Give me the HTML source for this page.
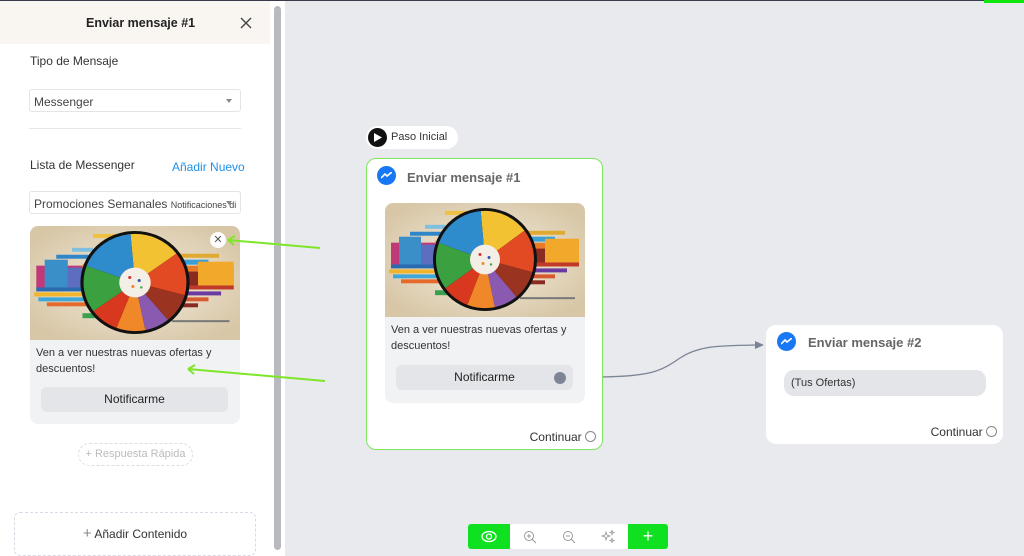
<!DOCTYPE html>
<html><head><meta charset="utf-8">
<style>
*{box-sizing:border-box;margin:0;padding:0}
body{width:1024px;height:556px;overflow:hidden;background:#e9eaee;font-family:"Liberation Sans",Arial,sans-serif;position:relative;color:#333}
.abs{position:absolute}
.topline{left:0;top:0;width:1024px;height:1px;background:#3a3b4a;z-index:5}
.panel{left:0;top:0;width:285px;height:556px;background:#fff}
.hdr{left:0;top:0;width:270px;height:44px;background:#f9f5f0;font-weight:bold;font-size:12.5px;color:#222}
.sel{border:1px solid #e3e4e8;border-radius:3px;background:#fff;font-size:12px;color:#444}
.caret{position:absolute;right:8px;top:50%;margin-top:-2px;border-left:3.5px solid transparent;border-right:3.5px solid transparent;border-top:4px solid #888}
.node{background:#fff;border-radius:10px}
.ttl{font-weight:bold;font-size:13px;color:#666}
.msg{display:inline-block;width:19px;height:19px;border-radius:50%;background:#1877f2}
.img{display:block}
.btn{background:#e4e5e8;border-radius:6px;font-size:12px;color:#222;text-align:center}
.circ{width:11px;height:11px;border:1px solid #888;border-radius:50%;display:inline-block}
</style></head><body>
<svg width="0" height="0" style="position:absolute">
<defs>
<symbol id="pic" viewBox="0 0 200 115" preserveAspectRatio="none">
<radialGradient id="bg" cx="50%" cy="50%" r="60%"><stop offset="0" stop-color="#f4ede0"/><stop offset="1" stop-color="#d8c7a7"/></radialGradient>
<rect width="200" height="115" fill="url(#bg)"/>
<g>
<rect x="6" y="40" width="64" height="25" fill="#c03a7a"/>
<rect x="14" y="34" width="22" height="31" fill="#3a8fc8"/>
<rect x="36" y="42" width="34" height="23" fill="#5d6ec0"/>
<rect x="50" y="38" width="20" height="27" fill="#e8a830"/>
<rect x="6" y="62" width="64" height="4" fill="#2a6ab0"/>
<rect x="4" y="67" width="66" height="4" fill="#f1b52b"/>
<rect x="8" y="72" width="62" height="4" fill="#3ea6d8"/>
<rect x="16" y="77" width="54" height="4" fill="#e56a2c"/>
<rect x="25" y="29" width="45" height="4" fill="#2f86c8"/>
<rect x="40" y="22" width="20" height="4" fill="#7fbfe0"/>
<rect x="60" y="8" width="28" height="4" fill="#f0c040"/>
<rect x="130" y="28" width="50" height="4" fill="#e0aa30"/>
<rect x="130" y="34" width="40" height="5" fill="#3aa0d8"/>
<rect x="130" y="40" width="64" height="24" fill="#e87a28"/>
<rect x="160" y="36" width="34" height="28" fill="#f2a82a"/>
<rect x="130" y="46" width="30" height="14" fill="#8a2a20"/>
<rect x="130" y="60" width="64" height="4" fill="#c03a2a"/>
<rect x="130" y="66" width="52" height="4" fill="#6a3aa0"/>
<rect x="130" y="72" width="40" height="4" fill="#d85a30"/>
<rect x="130" y="78" width="30" height="4" fill="#8a2a20"/>
<rect x="135" y="95" width="55" height="2" fill="#777"/>
<rect x="50" y="88" width="20" height="5" fill="#3aa050"/>
</g>
<circle cx="100" cy="57" r="52" fill="#111"/>
<g transform="rotate(-95 100 57)">
<circle cx="100" cy="57" r="24.5" fill="none" stroke="#f2c232" stroke-width="49" stroke-dasharray="25 200"/>
<circle cx="100" cy="57" r="24.5" fill="none" stroke="#e24a24" stroke-width="49" stroke-dasharray="0 25 22 200"/>
<circle cx="100" cy="57" r="24.5" fill="none" stroke="#9a3420" stroke-width="49" stroke-dasharray="0 47 15 200"/>
<circle cx="100" cy="57" r="24.5" fill="none" stroke="#8a5ab0" stroke-width="49" stroke-dasharray="0 62 12 200"/>
<circle cx="100" cy="57" r="24.5" fill="none" stroke="#f0882a" stroke-width="49" stroke-dasharray="0 74 14 200"/>
<circle cx="100" cy="57" r="24.5" fill="none" stroke="#d8381e" stroke-width="49" stroke-dasharray="0 88 14 200"/>
<circle cx="100" cy="57" r="24.5" fill="none" stroke="#3aa040" stroke-width="49" stroke-dasharray="0 102 24 200"/>
<circle cx="100" cy="57" r="24.5" fill="none" stroke="#2f8ccc" stroke-width="49" stroke-dasharray="0 126 28 200"/>
</g>
<circle cx="100" cy="57" r="15" fill="#f3eee6"/>
<circle cx="95" cy="52" r="1.5" fill="#c33"/><circle cx="104" cy="55" r="1.5" fill="#35a"/><circle cx="98" cy="61" r="1.5" fill="#e83"/><circle cx="106" cy="62" r="1.2" fill="#3a4"/>
</symbol>
</defs></svg>

<div class="abs topline"></div>
<div class="abs panel"></div>
<div class="abs hdr"><div class="abs" style="left:86px;top:16px">Enviar mensaje #1</div>
<svg class="abs" style="left:240px;top:17px" width="12" height="12" viewBox="0 0 12 12"><path d="M1 1L11 11M11 1L1 11" stroke="#444" stroke-width="1.4"/></svg></div>
<div class="abs" style="left:30px;top:54px;font-size:12px;color:#333">Tipo de Mensaje</div>
<div class="abs sel" style="left:29px;top:89px;width:212px;height:23px;padding:5px 4px">Messenger<span class="caret"></span></div>
<div class="abs" style="left:29px;top:128px;width:212px;height:1px;background:#e6e7ea"></div>
<div class="abs" style="left:30px;top:158px;font-size:12px;color:#333">Lista de Messenger</div>
<div class="abs" style="left:172px;top:160px;font-size:12px;color:#1e90e8">Añadir Nuevo</div>
<div class="abs sel" style="left:29px;top:191px;width:212px;height:23px;padding:5px 18px 5px 4px;white-space:nowrap;overflow:hidden">Promociones Semanales <span style="font-size:9px">Notificaciones di</span><span class="caret"></span></div>
<div class="abs" style="left:30px;top:226px;width:210px;height:198px;background:#f1f2f4;border-radius:8px;overflow:hidden">
<svg class="img" width="210" height="114"><use href="#pic"/></svg>
<div style="padding:5px 6px;font-size:11px;line-height:16px;color:#333">Ven a ver nuestras nuevas ofertas y descuentos!</div>
<div class="abs btn" style="left:11px;top:161px;width:187px;height:25px;line-height:25px">Notificarme</div>
<div class="abs" style="left:180px;top:6px;width:16px;height:16px;border-radius:50%;background:#fff;font-size:11px;line-height:16px;text-align:center;color:#555">✕</div>
</div>
<div class="abs" style="left:78px;top:443px;width:115px;height:23px;border:1px dashed #ddd;border-radius:12px;font-size:11px;color:#bbb;text-align:center;line-height:21px">+ Respuesta Rápida</div>
<div class="abs" style="left:14px;top:512px;width:242px;height:44px;border:1px dashed #d8dbe6;border-radius:6px;font-size:12px;color:#333;text-align:center;line-height:42px"><span style="color:#888;font-size:15px">+</span> Añadir Contenido</div>
<div class="abs" style="left:274px;top:6px;width:7px;height:544px;background:#b9b9c0;border-radius:4px"></div>
<div class="abs" style="left:984px;top:0;width:40px;height:3px;background:#0ee60e;z-index:6"></div>

<svg class="abs" style="left:0;top:0" width="1024" height="556">
<path d="M188 369L325 381" stroke="#7ee628" stroke-width="2"/>
<path d="M228 240L320 248" stroke="#7ee628" stroke-width="2"/>
<path d="M188 369l7-4M188 369l6 5" stroke="#7ee628" stroke-width="2"/>
<path d="M228 240l7-4M228 240l6 5" stroke="#7ee628" stroke-width="2"/>
<path d="M602 377C650 376 660 372 680 358C700 345 720 346 755 345" stroke="#7a8494" stroke-width="1.3" fill="none"/>
<path d="M755 341L764 345L755 349Z" fill="#7a8494"/>
</svg>

<div class="abs" style="left:366px;top:126px;width:92px;height:23px;background:#fff;border-radius:12px;font-size:11px;color:#333"><span class="abs" style="left:2px;top:2px;width:19px;height:19px;border-radius:50%;background:#111"></span><svg class="abs" style="left:8px;top:7px" width="8" height="9"><path d="M0 0L8 4.5L0 9Z" fill="#fff"/></svg><span class="abs" style="left:25px;top:5px">Paso Inicial</span></div>

<div class="abs node" style="left:366px;top:158px;width:237px;height:292px;border:1.5px solid #7ee65e">
<span class="abs msg" style="left:10px;top:7px"></span><svg class="abs" style="left:14px;top:13px" width="11" height="7"><path d="M0 6L4 2L6 4L11 0" stroke="#fff" stroke-width="1.6" fill="none"/></svg>
<div class="abs ttl" style="left:40px;top:11px">Enviar mensaje #1</div>
<div class="abs" style="left:18px;top:44px;width:200px;height:200px;background:#f1f2f4;border-radius:8px;overflow:hidden">
<svg class="img" width="200" height="114"><use href="#pic"/></svg>
<div style="padding:5px 6px;font-size:11px;line-height:16px;color:#333">Ven a ver nuestras nuevas ofertas y descuentos!</div>
<div class="abs btn" style="left:11px;top:162px;width:177px;height:25px;line-height:25px">Notificarme<span class="abs" style="right:7px;top:7px;width:12px;height:12px;border-radius:50%;background:#7d8596"></span></div>
</div>
<div class="abs" style="right:6px;top:271px;font-size:12px;color:#333">Continuar <span class="circ" style="vertical-align:-1px"></span></div>
</div>

<div class="abs node" style="left:766px;top:325px;width:237px;height:119px">
<span class="abs msg" style="left:11px;top:7px"></span><svg class="abs" style="left:15px;top:13px" width="11" height="7"><path d="M0 6L4 2L6 4L11 0" stroke="#fff" stroke-width="1.6" fill="none"/></svg>
<div class="abs ttl" style="left:42px;top:10px">Enviar mensaje #2</div>
<div class="abs" style="left:18px;top:45px;width:202px;height:26px;background:#e3e5e9;border-radius:10px;font-size:11px;line-height:26px;padding-left:7px">(Tus Ofertas)</div>
<div class="abs" style="right:6px;top:100px;font-size:12px;color:#333">Continuar <span class="circ" style="vertical-align:-1px"></span></div>
</div>

<div class="abs" style="left:468px;top:524px;width:200px;height:25px;background:#fff;border-radius:3px;overflow:hidden">
<div class="abs" style="left:0;top:0;width:42px;height:25px;background:#0fe020"></div>
<svg class="abs" style="left:13px;top:6px" width="16" height="13"><ellipse cx="8" cy="6.5" rx="7" ry="5" stroke="#fff" stroke-width="1.3" fill="none"/><circle cx="8" cy="6.5" r="2.5" stroke="#fff" stroke-width="1.3" fill="none"/></svg>
<svg class="abs" style="left:55px;top:6px" width="14" height="14"><circle cx="6" cy="6" r="4.5" stroke="#999" fill="none"/><path d="M9 9L13 13M4 6H8M6 4V8" stroke="#999"/></svg>
<svg class="abs" style="left:94px;top:6px" width="14" height="14"><circle cx="6" cy="6" r="4.5" stroke="#999" fill="none"/><path d="M9 9L13 13M4 6H8" stroke="#999"/></svg>
<svg class="abs" style="left:133px;top:5px" width="14" height="14"><path d="M5 3L6 6L9 7L6 8L5 11L4 8L1 7L4 6Z M11 1L11.5 3L13 3.5L11.5 4L11 6L10.5 4L9 3.5L10.5 3Z M11 9L11.5 11L13 11.5L11.5 12L11 14L10.5 12L9 11.5L10.5 11Z" stroke="#999" stroke-width="0.8" fill="none"/></svg>
<div class="abs" style="left:160px;top:0;width:40px;height:25px;background:#0fe020;color:#fff;font-size:18px;text-align:center;line-height:24px">+</div>
</div>
</body></html>
